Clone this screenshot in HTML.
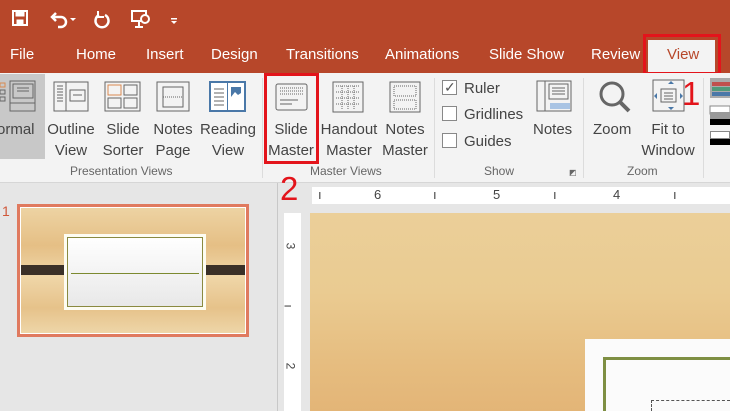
<!DOCTYPE html>
<html><head><meta charset="utf-8"><style>
*{margin:0;padding:0;box-sizing:border-box}
body{width:730px;height:411px;overflow:hidden;background:#e6e6e6;font-family:"Liberation Sans",sans-serif;position:relative}
.a{position:absolute}
#top{left:0;top:0;width:730px;height:73px;background:#b7472a}
.tab{position:absolute;top:46px;color:#fff;font-size:15px}
#rib{left:0;top:73px;width:730px;height:110px;background:#f3f3f3;border-bottom:1px solid #d6d6d6}
.lbl{position:absolute;font-size:15px;color:#444;text-align:center;line-height:21px}
.grp{position:absolute;top:164px;font-size:12px;color:#666}
.sep{position:absolute;top:78px;width:1px;height:100px;background:#dcdcdc}
.red{border:3px solid #e3141b;position:absolute}
.rn{position:absolute;color:#e3141b;font-size:33px;font-family:"Liberation Sans",sans-serif}
.cb{position:absolute;width:15px;height:15px;border:1px solid #888;background:#fff;left:442px}
</style></head><body>
<div class="a" id="top"></div>
<svg class="a" style="left:10px;top:8px" width="180" height="22" viewBox="0 0 180 22">
<g fill="none" stroke="#fff" stroke-width="2.5">
<rect x="3" y="3" width="14" height="14" stroke-width="2"/><rect x="6" y="3" width="8" height="5" fill="#fff" stroke-width="1"/><rect x="7" y="12" width="6" height="5" fill="#fff" stroke-width="1"/>
<path d="M42 9 h9 a5 5 0 0 1 0 10 h-3"/><path d="M46 5 l-4 4 l4 4"/>
<path d="M89 7 a6.5 6.5 0 1 0 6 0"/><path d="M88 3 v6 h6" stroke-width="2"/>
<rect x="122" y="3" width="14" height="10" stroke-width="2"/><path d="M129 13 v6 M125 19 h8" stroke-width="2"/><circle cx="135" cy="11" r="4" fill="#b7472a" stroke-width="2"/>
</g>
<path d="M60 10 l3 3 l3 -3z" fill="#fff"/>
<rect x="161" y="10" width="6" height="1.5" fill="#fff"/><path d="M161 13 l3 3 l3 -3z" fill="#fff"/>
</svg>
<div class="tab" style="left:10px">File</div>
<div class="tab" style="left:76px">Home</div>
<div class="tab" style="left:146px">Insert</div>
<div class="tab" style="left:211px">Design</div>
<div class="tab" style="left:286px">Transitions</div>
<div class="tab" style="left:385px">Animations</div>
<div class="tab" style="left:489px">Slide Show</div>
<div class="tab" style="left:591px">Review</div>
<div class="a" style="left:648px;top:40px;width:67px;height:34px;background:#f3f3f3"></div>
<div class="tab" style="left:667px;color:#b7472a">View</div>
<div class="red" style="left:643px;top:34px;width:78px;height:41px"></div>

<div class="a" id="rib"></div>
<div class="a" style="left:0;top:74px;width:45px;height:85px;background:#c8c8c8"></div>
<svg class="a" style="left:0;top:78px" width="260" height="40" viewBox="0 0 260 40">
<g fill="none" stroke="#666" stroke-width="1">
<rect x="10" y="3" width="25" height="30"/><rect x="13" y="6" width="20" height="14"/><path d="M10 25 h25 M17 10 h12 M17 13 h12"/>
<rect x="0" y="5" width="5" height="4" stroke="#d98a50"/><rect x="0" y="12" width="5" height="4"/><rect x="0" y="19" width="5" height="4"/>
<rect x="54" y="4" width="34" height="29"/><path d="M66 4 v29"/><rect x="70" y="12" width="15" height="11"/><path d="M57 8h6M57 11h6M57 14h6M57 17h6M57 20h6M57 23h6M73 17h9"/>
<rect x="105" y="4" width="35" height="29"/><rect x="108" y="7" width="13" height="10" stroke="#d98a50"/><rect x="124" y="7" width="13" height="10"/><rect x="108" y="20" width="13" height="10"/><rect x="124" y="20" width="13" height="10"/>
<rect x="157" y="4" width="32" height="29"/><rect x="163" y="9" width="20" height="20"/><path d="M163 19h20" stroke-dasharray="1 1"/>
</g>
<rect x="209" y="3" width="37" height="31" fill="#4a78a8"/>
<rect x="211" y="5" width="16" height="27" fill="#fff"/><rect x="228" y="5" width="16" height="27" fill="#fff"/>
<path d="M214 11h10M214 15h10M214 19h10M214 23h10M214 27h10" stroke="#666"/>
<rect x="231" y="9" width="10" height="10" fill="#4a78a8"/><path d="M231 19 l4 -5 l3 3 l3 -2 v4z" fill="#fff"/>
</svg>
<svg class="a" style="left:260px;top:78px" width="470" height="40" viewBox="0 0 470 40">
<g fill="none" stroke="#666" stroke-width="1">
<rect x="16" y="6" width="31" height="26" rx="2"/><path d="M20 10h23M20 13h23M20 16h23" stroke-dasharray="1 1"/><path d="M20 22h18M20 26h12"/>
<rect x="73" y="4" width="30" height="30"/><path d="M76 8h24M76 14h24M76 20h24M76 26h24M82 8v24M88 8v24M94 8v24" stroke-dasharray="1 1"/>
<rect x="130" y="4" width="30" height="30"/><rect x="134" y="8" width="22" height="10" stroke-dasharray="1 1"/><rect x="134" y="22" width="22" height="9" stroke-dasharray="1 1"/>
<rect x="277" y="3" width="34" height="30"/><path d="M285 3v30"/><rect x="289" y="6" width="19" height="15"/><path d="M292 10h13M292 13h13M292 16h13"/>
<circle cx="352" cy="16" r="11" stroke-width="3"/><path d="M360 24 l9 9" stroke-width="4"/>
<rect x="393" y="2" width="31" height="31"/><rect x="401" y="11" width="15" height="13"/><path d="M404 15h9M404 18h9M404 21h9"/>
</g>
<path d="M290 25h20v6h-20z" fill="#a9c4e4"/>
<path d="M408 6l3 -3 l3 3zM408 29l3 3l3 -3zM397 15l-3 3l3 3zM420 15l3 3l-3 3z" fill="#4a78a8"/>
<rect x="450" y="0" width="20" height="20" fill="#aaa"/><rect x="452" y="4" width="18" height="4" fill="#c0504d"/><rect x="452" y="9" width="18" height="4" fill="#4f9a7a"/><rect x="452" y="14" width="18" height="4" fill="#4a78a8"/>
<rect x="450" y="28" width="20" height="8" fill="#fff" stroke="#888"/>
</svg>
<div class="a" style="left:710px;top:112px;width:20px;height:38px">
<div style="height:7px;background:#999"></div><div style="height:6px;background:#000"></div><div style="height:6px"></div><div style="height:8px;background:#fff;border:1px solid #888"></div><div style="height:6px;background:#000"></div></div>

<div class="lbl" style="left:-3px;top:119px">ormal</div>
<div class="lbl" style="left:44px;top:119px;width:54px">Outline<br>View</div>
<div class="lbl" style="left:100px;top:119px;width:46px">Slide<br>Sorter</div>
<div class="lbl" style="left:150px;top:119px;width:46px">Notes<br>Page</div>
<div class="lbl" style="left:198px;top:119px;width:60px">Reading<br>View</div>
<div class="lbl" style="left:266px;top:119px;width:50px">Slide<br>Master</div>
<div class="lbl" style="left:318px;top:119px;width:62px">Handout<br>Master</div>
<div class="lbl" style="left:380px;top:119px;width:50px">Notes<br>Master</div>
<div class="lbl" style="left:464px;top:78px">Ruler</div>
<div class="lbl" style="left:464px;top:104px">Gridlines</div>
<div class="lbl" style="left:464px;top:131px">Guides</div>
<div class="cb" style="top:80px"></div>
<div class="a" style="left:444px;top:79px;color:#555;font-size:14px">✓</div>
<div class="cb" style="top:106px"></div>
<div class="cb" style="top:133px"></div>
<div class="lbl" style="left:533px;top:119px">Notes</div>
<div class="lbl" style="left:593px;top:119px">Zoom</div>
<div class="lbl" style="left:640px;top:119px;width:56px">Fit to<br>Window</div>
<div class="grp" style="left:70px">Presentation Views</div>
<div class="grp" style="left:310px">Master Views</div>
<div class="grp" style="left:484px">Show</div>
<div class="grp" style="left:569px;font-size:8px;top:168px">◩</div>
<div class="grp" style="left:627px">Zoom</div>
<div class="sep" style="left:262px"></div>
<div class="sep" style="left:434px"></div>
<div class="sep" style="left:583px"></div>
<div class="sep" style="left:703px"></div>
<div class="red" style="left:264px;top:73px;width:55px;height:91px"></div>
<div class="rn" style="left:682px;top:75px">1</div>
<div class="rn" style="left:280px;top:170px">2</div>

<div class="a" style="left:277px;top:183px;width:1px;height:228px;background:#c8c8c8"></div>
<div class="a" style="left:2px;top:203px;font-size:14px;color:#d0583a">1</div>
<div class="a" style="left:17px;top:204px;width:232px;height:133px;background:#e07a5f;padding:3px">
<div style="width:100%;height:100%;border:1px solid #fff;background:linear-gradient(180deg,#edd3a3,#e5bf85 30%,#efd6a8 55%,#e6c28a 80%,#eed6a8);position:relative">
<div class="a" style="left:0;top:57px;width:224px;height:10px;background:#3a3028"></div>
<div class="a" style="left:43px;top:26px;width:142px;height:76px;background:linear-gradient(#fff,#e8e8e8);border:3px solid #fdfcf2;outline:1px solid #8a8a40;outline-offset:-4px"></div>
<div class="a" style="left:50px;top:65px;width:128px;height:1px;background:#7c8a30"></div>
</div></div>
<div class="a" style="left:312px;top:187px;width:418px;height:17px;background:#fff;font-size:13px;color:#444">
<span class="a" style="left:62px;top:0">6</span><span class="a" style="left:181px;top:0">5</span><span class="a" style="left:301px;top:0">4</span>
<span class="a" style="left:6px;top:0">ı</span><span class="a" style="left:121px;top:0">ı</span><span class="a" style="left:241px;top:0">ı</span><span class="a" style="left:361px;top:0">ı</span></div>
<div class="a" style="left:284px;top:213px;width:17px;height:198px;background:#fff;font-size:12px;color:#444">
<span class="a" style="left:3px;top:26px;transform:rotate(90deg)">3</span><span class="a" style="left:3px;top:86px;transform:rotate(90deg)">ı</span><span class="a" style="left:3px;top:146px;transform:rotate(90deg)">2</span></div>
<div class="a" style="left:310px;top:213px;width:420px;height:198px;background:linear-gradient(180deg,#ebcf99,#eacb91 40%,#e6bd80 75%,#e3b577)"></div>
<div class="a" style="left:585px;top:339px;width:145px;height:72px;background:#fbfbfb"></div>
<div class="a" style="left:603px;top:357px;width:127px;height:54px;border-top:3px solid #7e8f43;border-left:3px solid #7e8f43"></div>
<div class="a" style="left:651px;top:400px;width:79px;height:11px;border-top:1px dashed #555;border-left:1px dashed #555"></div>
</body></html>
